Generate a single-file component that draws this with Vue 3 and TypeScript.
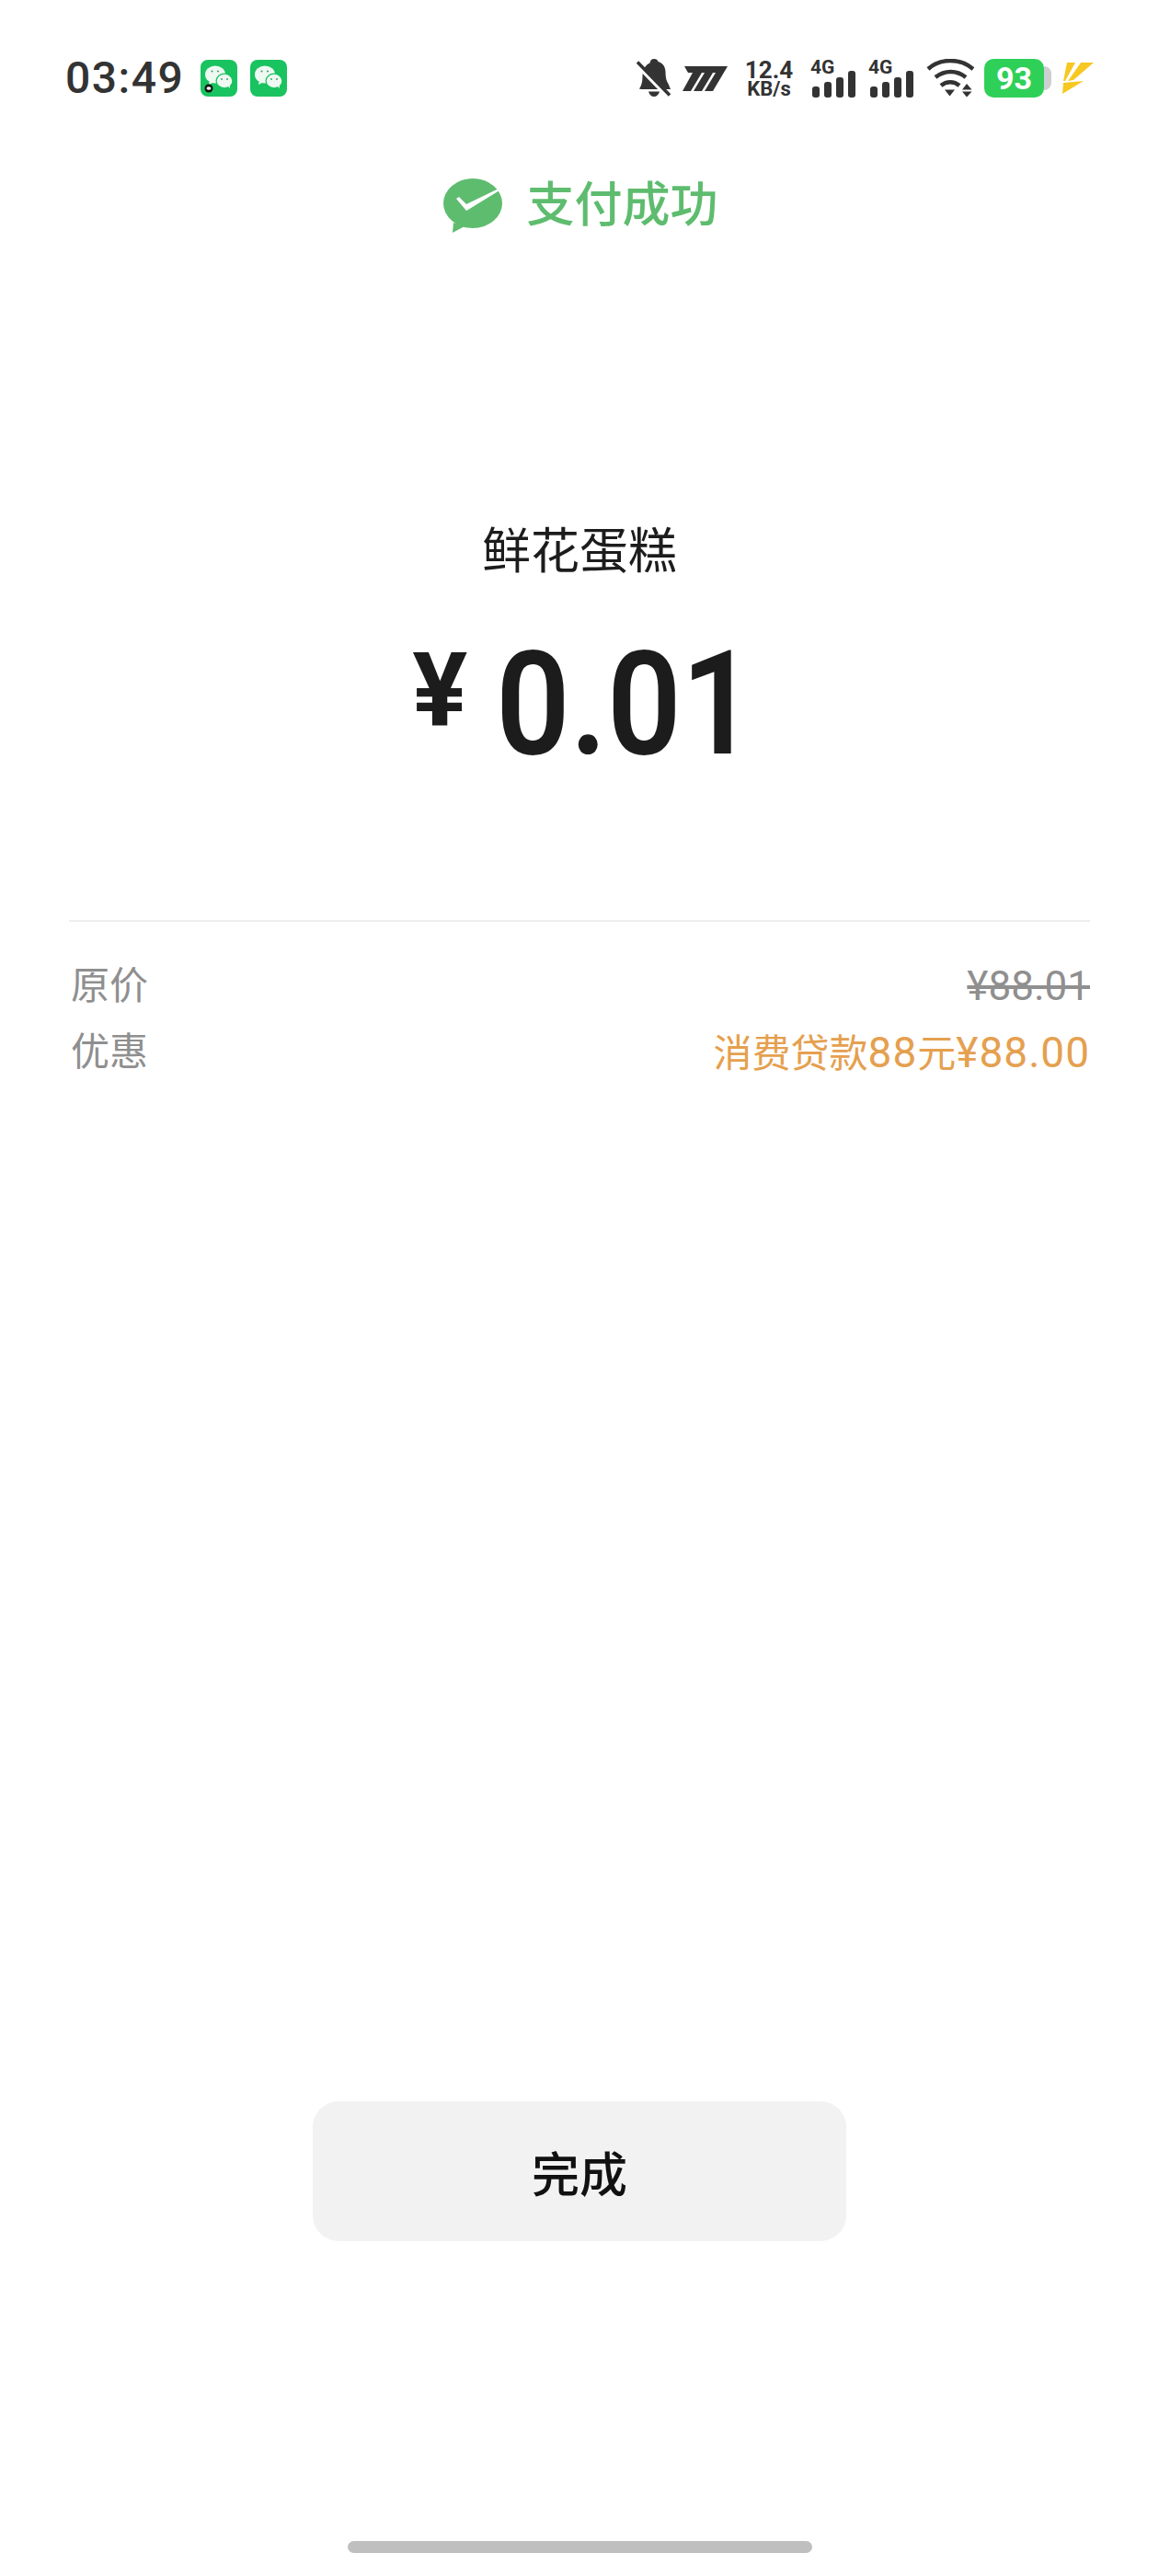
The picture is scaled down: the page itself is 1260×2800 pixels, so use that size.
<script setup lang="ts">
const signalBars = [
  { x: 1, h: 12 },
  { x: 14, h: 17 },
  { x: 26, h: 22 },
  { x: 39, h: 29 }
]
const sims = [0, 1]
const notifications = [{ dot: true }, { dot: false }]
</script>

<template>
  <div class="page">
    <div class="status-bar">
      <span class="time">03:49</span>
      <div class="notif-icons">
        <svg v-for="(n, i) in notifications" :key="i" class="wechat-icon" viewBox="0 0 40 40" width="40" height="40">
          <rect width="40" height="40" rx="8" fill="#19c35f" />
          <ellipse cx="16" cy="16" rx="11" ry="9.500" fill="#eef9f2" />
          <path d="M10 22l-1 5 6-3z" fill="#eef9f2" />
          <ellipse cx="26" cy="23" rx="9.500" ry="8.500" fill="#19c35f" />
          <ellipse cx="26" cy="23" rx="8.300" ry="7.200" fill="#eef9f2" />
          <path d="M29 28l3 3-.5-5z" fill="#eef9f2" />
          <circle cx="12.500" cy="12.500" r="1.100" fill="#4a9f70" />
          <circle cx="19" cy="12.500" r="1.100" fill="#4a9f70" />
          <circle cx="23" cy="21" r="1" fill="#4a9f70" />
          <circle cx="29" cy="21" r="1" fill="#4a9f70" />
          <template v-if="n.dot">
            <circle cx="9" cy="31" r="4.500" fill="#111" />
            <ellipse cx="9" cy="31" rx="2.500" ry="1.800" fill="#fff" />
          </template>
        </svg>
      </div>

      <div class="sys-icons">
        <svg class="bell" viewBox="0 0 38 42" width="38" height="42">
          <path d="M19 0c2.500 0 4 1.300 4.500 3 5.500 1.800 8 6 8 11.500 0 6 1 9.500 3 12.500L37 33H5l-2-.5c2.500-3.500 3.500-8 3.500-13.500 0-8 4-13 8-14.500C15 1.300 16.500 0 19 0z" fill="#333" />
          <path d="M13 35.500h12c-.8 3.500-3.300 5.500-6 5.500s-5.200-2-6-5.500z" fill="#333" />
          <path d="M1 6l35 36" stroke="#fff" stroke-width="6" />
          <path d="M1 3.500l35 36" stroke="#333" stroke-width="3.500" />
        </svg>
        <svg class="mi-logo" viewBox="0 0 49 28" width="49" height="28">
          <path d="M2 1h47L33 28h-9l12-20h-3L21 28h-9l12-20h-3L9 28H0L11 8H6z" fill="#333" />
        </svg>
        <div class="net-speed">
          <span class="speed-val">12.4</span>
          <span class="speed-unit">KB/s</span>
        </div>
        <div class="sims">
          <div v-for="s in sims" :key="s" class="sim">
            <span class="sim-label">4G</span>
            <div class="bars">
              <span
                v-for="b in signalBars"
                :key="b.x"
                class="bar"
                :style="{ height: b.h + 'px' }"
              ></span>
            </div>
          </div>
        </div>
        <svg class="wifi" viewBox="0 0 52 42" width="52" height="42">
          <path d="M2 11C15-1 37-1 51 11" fill="none" stroke="#333" stroke-width="4.500" />
          <path d="M10 20c10-8 23-8 33 0" fill="none" stroke="#333" stroke-width="4.500" />
          <path d="M16 29c6-5 14-5 20 0" fill="none" stroke="#333" stroke-width="4.500" />
          <path d="M20 33.500h11l-5.500 7z" fill="#333" />
          <path d="M39 33.500l5-6.500 5.500 6.500z M39 35.500h10.500l-5.500 6z" fill="#333" />
        </svg>
        <div class="battery">
          <div class="battery-body">93</div>
          <span class="battery-tip"></span>
        </div>
        <svg class="bolt" viewBox="0 0 36 36" width="36" height="36">
          <path d="M6 1h9L4 21H2z" fill="#f7c822" />
          <path d="M21 1h14L13 20l-6 1z" fill="#f7c822" />
          <path d="M2 23l22-2L1 35z" fill="#f7c822" />
        </svg>
      </div>
    </div>

    <div class="success">
      <svg class="success-icon" viewBox="0 0 64 60" width="64" height="60">
        <ellipse cx="32" cy="27" rx="32" ry="27" fill="#5ebc6e" />
        <path d="M11 48l-1 11 13-7z" fill="#5ebc6e" />
        <path d="M14 22l3-2 8 8L60 11l1 2-36 22z" fill="#fff" />
      </svg>
      <span class="success-text">支付成功</span>
    </div>

    <div class="product">鲜花蛋糕</div>
    <div class="amount">
      <span class="yen">¥</span>
      <span class="value">0.01</span>
    </div>

    <div class="details">
      <div class="row">
        <span class="label">原价</span>
        <span class="price-old">¥88.01</span>
      </div>
      <div class="row">
        <span class="label">优惠</span>
        <span class="discount">消费贷款<span class="num">88</span>元<span class="num">¥88.00</span></span>
      </div>
    </div>

    <button class="done">完成</button>
    <div class="home-bar"></div>
  </div>
</template>

<style scoped>
.page {
  width: 1260px;
  height: 2800px;
  background: #fff;
  display: flex;
  flex-direction: column;
  align-items: center;
  font-family: "Roboto", "Noto Sans CJK SC", sans-serif;
  overflow: hidden;
}

.status-bar {
  width: 100%;
  box-sizing: border-box;
  height: 42px;
  margin-top: 64px;
  padding: 0 70px 0 71px;
  display: flex;
  align-items: center;
}
.time {
  font-size: 48px;
  font-weight: 500;
  color: #333;
  line-height: 42px;
  letter-spacing: 1.500px;
}
.notif-icons { display: flex; gap: 14px; margin-left: 18px; }
.wechat-icon { display: block; }

.sys-icons { display: flex; align-items: flex-end; margin-left: auto; height: 42px; }
.bell { display: block; }
.mi-logo { display: block; margin: 0 0 7px 12px; }
.net-speed {
  display: flex;
  flex-direction: column;
  align-items: center;
  margin-left: 20px;
  width: 50px;
  margin-right: 2px;
  color: #333;
  font-weight: 700;
}
.speed-val { font-size: 26px; line-height: 24px; }
.speed-unit { font-size: 22px; line-height: 18px; }

.sims { display: flex; gap: 14px; margin-left: 18px; }
.sim { position: relative; width: 49px; height: 42px; }
.sim-label {
  position: absolute;
  left: 0;
  top: -2px;
  font-size: 21px;
  line-height: 22px;
  font-weight: 700;
  color: #333;
}
.bars {
  position: absolute;
  right: 0;
  bottom: 0;
  display: flex;
  align-items: flex-end;
  gap: 5px;
}
.bar { width: 8px; background: #333; border-radius: 3px; }

.wifi { display: block; margin-left: 14px; }
.battery { display: flex; align-items: center; margin-left: 11px; height: 42px; }
.battery-body {
  width: 65px;
  height: 42px;
  background: #2fd058;
  border-radius: 10px;
  color: #fff;
  font-size: 34px;
  font-weight: 700;
  line-height: 42px;
  text-align: center;
}
.battery-tip {
  width: 8px;
  height: 26px;
  background: #cfcfcf;
  border-radius: 0 8px 8px 0;
}
.bolt { display: block; margin: 0 0 3px 11px; }

.success {
  display: flex;
  align-items: center;
  gap: 26px;
  margin-top: 88px;
  padding-left: 3px;
}
.success-icon { display: block; }
.success-text {
  font-size: 52px;
  line-height: 60px;
  font-weight: 500;
  color: #5ebc6e;
}

.product {
  margin-top: 316px;
  font-size: 53px;
  line-height: 60px;
  color: #1c1c1c;
}

.amount {
  margin-top: 60px;
  display: flex;
  align-items: flex-start;
  color: #1c1c1c;
  height: 150px;
  padding-left: 12px;
}
.yen { font-size: 112px; line-height: 120px; font-weight: 700; margin-right: 31px; }
/* narrow the digits a little, the original face is DIN-like */
.value {
  font-size: 157px;
  line-height: 150px;
  font-weight: 600;
  transform: scaleX(0.9);
  transform-origin: left center;
  margin-right: -29px;
}

.details {
  width: 1110px;
  margin-top: 160px;
  border-top: 2px solid #eeeeee;
  padding-top: 34px;
}
.row {
  display: flex;
  justify-content: space-between;
  font-size: 42px;
  line-height: 72px;
}
.label { color: #8f8f8f; padding-left: 2px; }
.price-old { color: #8f8f8f; text-decoration: line-through; font-size: 44px; }
.discount { color: #e5a04f; }
.num { font-size: 46px; letter-spacing: 1px; }

.done {
  margin-top: auto;
  width: 580px;
  height: 152px;
  border: none;
  border-radius: 28px;
  background: #f2f2f2;
  color: #111;
  font-family: inherit;
  font-size: 52px;
  font-weight: 500;
}
.home-bar {
  margin: 326px 0 25px;
  width: 505px;
  height: 13px;
  border-radius: 7px;
  background: #bfbfbf;
}
</style>
